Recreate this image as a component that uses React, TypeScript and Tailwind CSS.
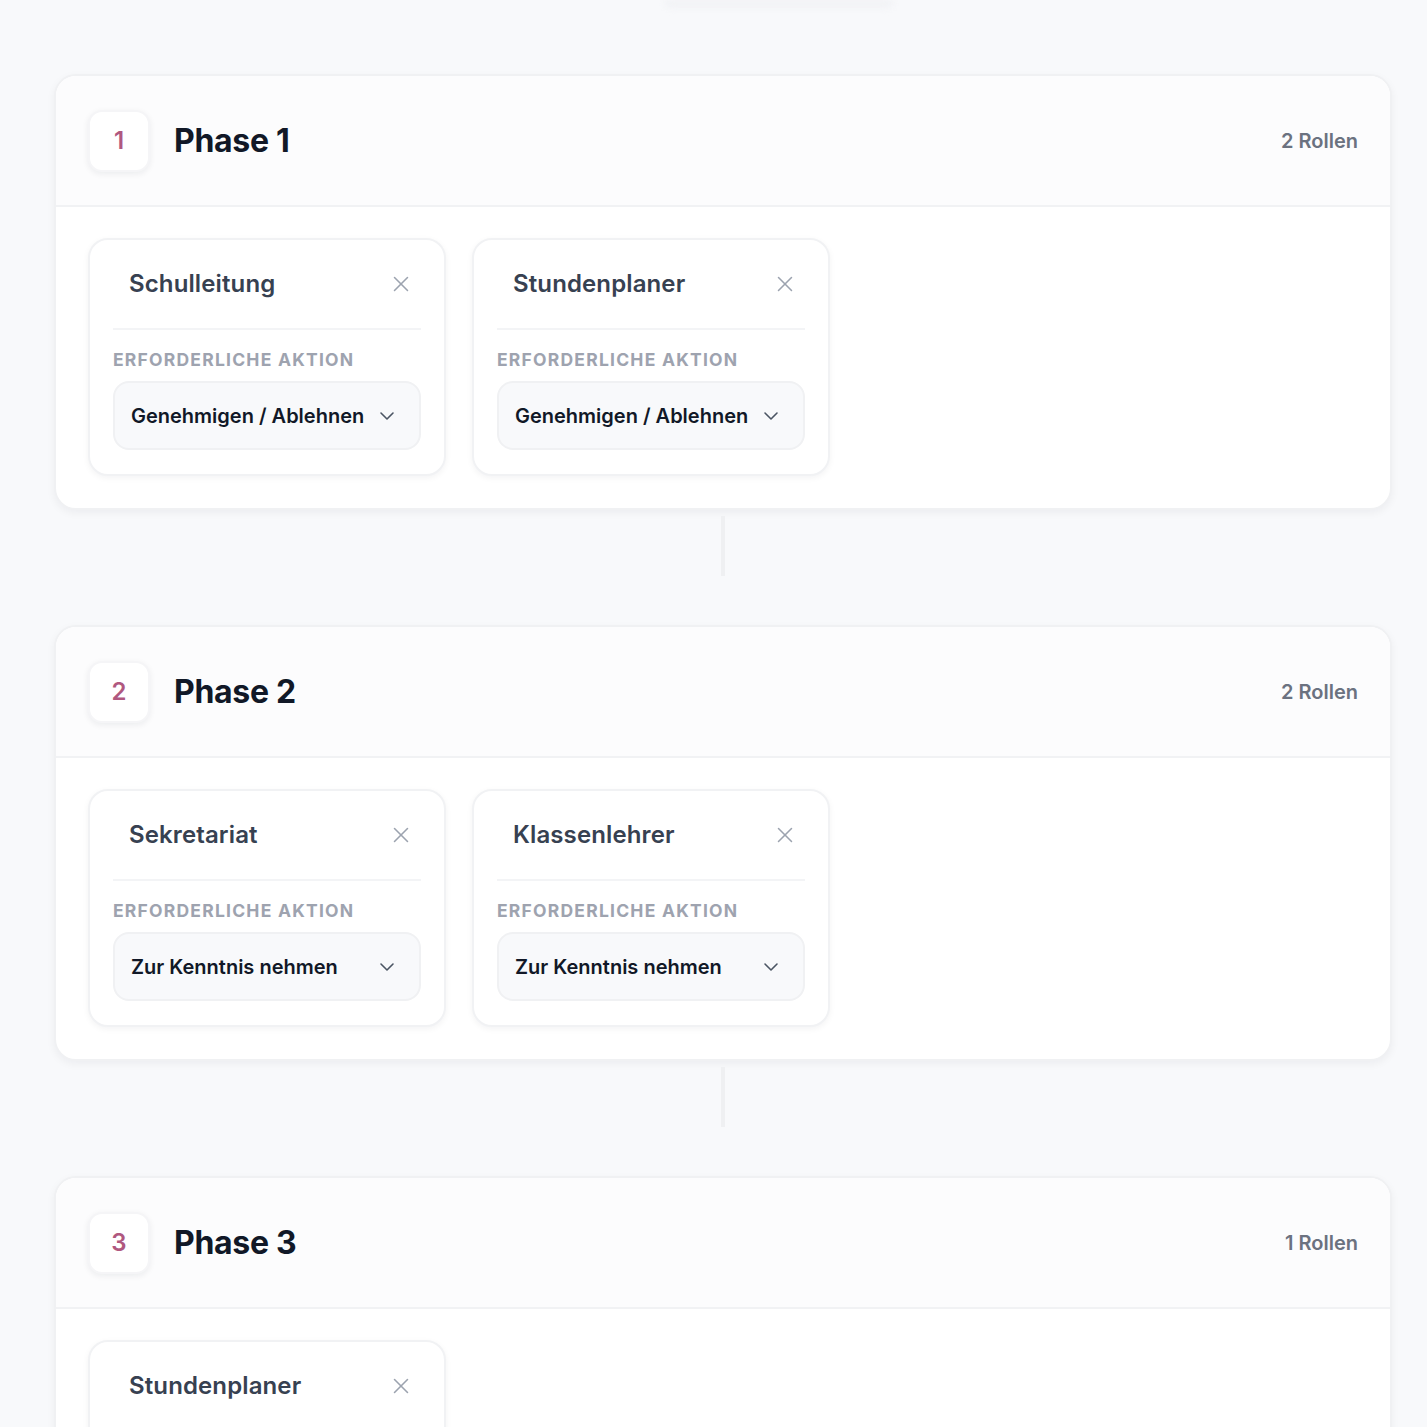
import React from 'react';
import { X, ChevronDown } from 'lucide-react';

type Role = { name: string; action: string };
type Phase = { id: number; roles: Role[] };

const phases: Phase[] = [
  {
    id: 1,
    roles: [
      { name: 'Schulleitung', action: 'Genehmigen / Ablehnen' },
      { name: 'Stundenplaner', action: 'Genehmigen / Ablehnen' },
    ],
  },
  {
    id: 2,
    roles: [
      { name: 'Sekretariat', action: 'Zur Kenntnis nehmen' },
      { name: 'Klassenlehrer', action: 'Zur Kenntnis nehmen' },
    ],
  },
  {
    id: 3,
    roles: [{ name: 'Stundenplaner', action: 'Genehmigen / Ablehnen' }],
  },
];

const RoleCard = ({ role }: { role: Role }) => (
  <div className="w-[358px] rounded-[20px] border-2 border-[#f1f2f4] bg-white px-[23px] pt-[21px] pb-[24px] shadow-[0_2px_6px_rgba(15,23,42,0.05)]">
    <div className="flex h-[69px] items-start justify-between border-b-2 border-[#f3f4f6] pl-[16px] pr-[7px] pt-[7px]">
      <span className="text-[24px] font-semibold leading-[32px] tracking-[0.005em] text-[#374151]">{role.name}</span>
      <X className="mt-[3px] h-[26px] w-[26px] text-[#9ca3af]" strokeWidth={1.4} />
    </div>
    <div className="mt-[18px] text-[17.5px] font-bold uppercase leading-[24px] tracking-[0.07em] text-[#9ea3af]">
      Erforderliche Aktion
    </div>
    <button className="mt-[9px] flex h-[69px] w-full items-center justify-between rounded-[16px] border-2 border-[#f0f1f3] bg-[#f8f9fb] pl-[16px] pr-[20px]">
      <span className="text-[20px] font-semibold text-[#111827]">{role.action}</span>
      <ChevronDown className="h-[24px] w-[24px] text-[#4b5563]" strokeWidth={1.6} />
    </button>
  </div>
);

const PhaseBlock = ({ phase }: { phase: Phase }) => (
  <div className="overflow-hidden rounded-[22px] border-2 border-[#f0f1f3] bg-white shadow-[0_3px_8px_rgba(15,23,42,0.05)]">
    <div className="flex h-[131px] items-center justify-between border-b-2 border-[#f1f2f4] bg-[#fcfcfd] pl-[32px] pr-[32px]">
      <div className="flex items-center gap-[24px]">
        <div className="flex h-[62px] w-[62px] items-center justify-center rounded-[14px] border-2 border-[#f5f5f7] bg-white text-[24px] font-semibold text-[#b0587f] shadow-[0_2px_6px_rgba(15,23,42,0.07)]">
          {phase.id}
        </div>
        <h2 className="text-[32px] font-bold tracking-[-0.01em] text-[#111827]">Phase {phase.id}</h2>
      </div>
      <span className="text-[20px] font-semibold text-[#6b7280]">{phase.roles.length} Rollen</span>
    </div>
    <div className="flex gap-[26px] px-[32px] pt-[31px] pb-[32px]">
      {phase.roles.map((r, i) => (
        <RoleCard key={i} role={r} />
      ))}
    </div>
  </div>
);

const App = () => {
  return (
    <div className="min-h-screen bg-[#f8f9fb] pl-[54px] pr-[35px]" style={{ fontFamily: 'Inter, "Noto Sans", sans-serif' }}>
      <div className="ml-[610px] h-[8px] w-[230px] rounded-b-full bg-[#f1f2f5] blur-[3px]" />
      <div className="pt-[66px]">
        {phases.map((p, i) => (
          <React.Fragment key={p.id}>
            {i > 0 && (
              <div className="flex h-[115px] justify-center">
                <div className="mt-[6px] h-[60px] w-[4px] bg-[#eff0f2]" />
              </div>
            )}
            <PhaseBlock phase={p} />
          </React.Fragment>
        ))}
      </div>
    </div>
  );
};

export default App;
